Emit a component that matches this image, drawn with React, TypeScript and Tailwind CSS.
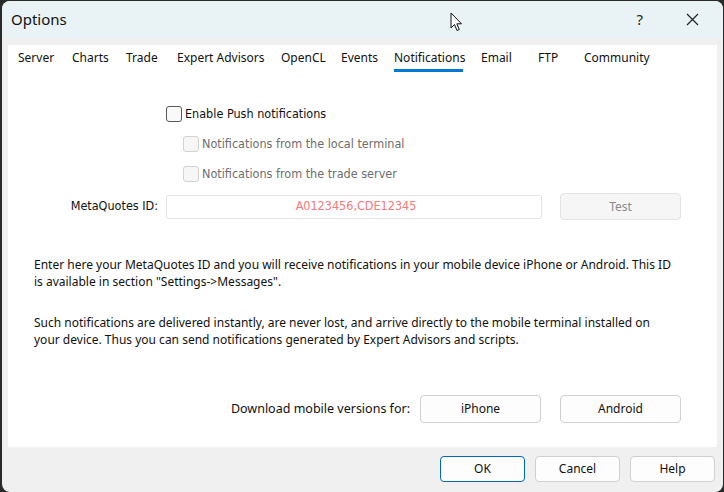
import React from "react";

// Options dialog — Notifications tab
const tabs: { label: string; w: string }[] = [
  { label: "Server", w: "w-[54px]" },
  { label: "Charts", w: "w-[54px]" },
  { label: "Trade", w: "w-[51px]" },
  { label: "Expert Advisors", w: "w-[104px]" },
  { label: "OpenCL", w: "w-[60px]" },
  { label: "Events", w: "w-[53px]" },
  { label: "Notifications", w: "w-[87px]" },
  { label: "Email", w: "w-[57px]" },
  { label: "FTP", w: "w-[46px]" },
  { label: "Community", w: "w-[90px]" },
];

const ui = "font-['Noto_Sans','Open_Sans',sans-serif]";
const tahoma = "font-['DejaVu_Sans_Condensed','Liberation_Sans',sans-serif]";

function CheckBox({ disabled, label }: { disabled?: boolean; label: string }) {
  return (
    <label className="flex h-[16px] items-center gap-[3px]">
      <span
        className={
          disabled
            ? "h-[16px] w-[16px] shrink-0 rounded-[3px] border border-[#d2d2d2] bg-[#f6f6f6]"
            : "h-[16px] w-[16px] shrink-0 rounded-[3px] border border-[#5a5a5a] bg-[#f9f9f9]"
        }
      />
      <span className={`${tahoma} text-[12.5px] leading-[16px] ${disabled ? "text-[#6d6d6d]" : "text-[#111]"}`}>
        {label}
      </span>
    </label>
  );
}

function Btn({ children, primary, muted, w, h }: { children: React.ReactNode; primary?: boolean; muted?: boolean; w: string; h: string }) {
  return (
    <button
      type="button"
      className={`${w} ${h} flex items-center justify-center rounded-[4px] border ${ui} text-[12px] ${
        primary
          ? "border-[#0067c0] bg-[#fdfdfd] text-[#111]"
          : muted
            ? "border-[#e3e3e3] bg-[#f6f6f6] text-[#8a8a8a]"
            : "border-[#d0d0d0] bg-[#fdfdfd] text-[#111]"
      }`}
    >
      {children}
    </button>
  );
}

export default function App() {
  return (
    <div className="relative h-[492px] w-[724px] overflow-hidden bg-[#2a2a2a] pl-[2px] pt-[1px]">
      <div className="flex h-[491px] w-[721px] flex-col overflow-hidden rounded-[8px] bg-[#f0f0f0]">
        {/* title bar */}
        <div className="flex h-[37px] shrink-0 items-center bg-[#e9f3f6] pl-[9px] pr-[24px]">
          <span className={`${ui} text-[15px] text-[#111]`}>Options</span>
          <span className={`${ui} ml-auto text-[15px] text-[#222]`}>?</span>
          <svg className="ml-[43px]" width="13" height="13" viewBox="0 0 13 13">
            <path d="M1 1L12 12M12 1L1 12" stroke="#222" strokeWidth="1.2" />
          </svg>
        </div>

        {/* content panel */}
        <div className="mx-[6px] mt-[7px] flex h-[402px] shrink-0 flex-col bg-white">
          <div className={`${ui} flex pl-[10px] pt-[2px] text-[12px] text-[#111]`}>
            {tabs.map((t) => (
              <div key={t.label} className={`${t.w} flex flex-col`}>
                <span className="flex h-[22px] items-center">{t.label}</span>
                {t.label === "Notifications" && <span className="h-[3px] w-[69px] bg-[#0078d4]" />}
              </div>
            ))}
          </div>

          <div className="mt-[34px] flex flex-col gap-[14px] pl-[158px]">
            <CheckBox label="Enable Push notifications" />
            <div className="flex flex-col gap-[14px] pl-[17px]">
              <CheckBox disabled label="Notifications from the local terminal" />
              <CheckBox disabled label="Notifications from the trade server" />
            </div>
          </div>

          <div className="mt-[11px] flex items-center">
            <span className={`${tahoma} w-[150px] text-right text-[12.5px] text-[#111]`}>MetaQuotes ID:</span>
            <div className="ml-[8px] flex h-[24px] w-[376px] items-center justify-center rounded-[2px] border border-[#e3e3e3] bg-white">
              <span className={`${tahoma} pl-[4px] text-[12.5px] text-[#f47a7a]`}>A0123456,CDE12345</span>
            </div>
            <div className="ml-[18px]">
              <Btn muted w="w-[121px]" h="h-[27px]">Test</Btn>
            </div>
          </div>

          <div className={`${ui} mt-[36px] whitespace-nowrap pl-[26px] text-[12px] leading-[17px] text-[#111]`}>
            <p>
              Enter here your MetaQuotes ID and you will receive notifications in your mobile device iPhone or Android. This ID
              <br />
              is available in section "Settings-&gt;Messages".
            </p>
            <p className="mt-[24px]">
              Such notifications are delivered instantly, are never lost, and arrive directly to the mobile terminal installed on
              <br />
              your device. Thus you can send notifications generated by Expert Advisors and scripts.
            </p>
          </div>

          <div className="mt-[47px] flex items-center justify-end gap-[19px] pr-[36px]">
            <span className={`${ui} mr-[-9px] text-[12.5px] text-[#111]`}>Download mobile versions for:</span>
            <Btn w="w-[121px]" h="h-[28px]">iPhone</Btn>
            <Btn w="w-[121px]" h="h-[28px]">Android</Btn>
          </div>
        </div>

        {/* footer */}
        <div className="flex justify-end gap-[10px] pr-[8px] pt-[9px]">
          <Btn primary w="w-[85px]" h="h-[26px]">OK</Btn>
          <Btn w="w-[85px]" h="h-[26px]">Cancel</Btn>
          <Btn w="w-[85px]" h="h-[26px]">Help</Btn>
        </div>
      </div>

      {/* mouse pointer */}
      <svg className="absolute left-[450px] top-[12px]" width="13" height="20" viewBox="0 0 13 20">
        <path d="M1 1V16L4.5 12.5L7 18.5L9.3 17.5L6.8 11.8H11.5Z" fill="#fff" stroke="#111" strokeWidth="1" strokeLinejoin="round" />
      </svg>
    </div>
  );
}
